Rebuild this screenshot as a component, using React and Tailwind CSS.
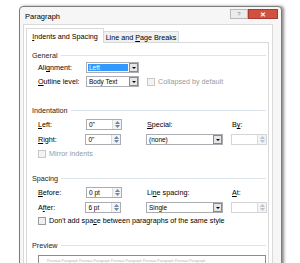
import React from "react";

const U = ({ children }) => <span className="underline underline-offset-[1px]">{children}</span>;

const SpinArrows = ({ disabled }) => (
  <div className="flex w-[9px] flex-col items-center justify-center gap-[1px] border-l border-[#dcdcdc] bg-[#f3f3f3]">
    <svg width="5" height="3" viewBox="0 0 5 3">
      <path d="M2.5 0 L5 3 L0 3 Z" fill={disabled ? "#b8c3d2" : "#6f86a6"} />
    </svg>
    <svg width="5" height="3" viewBox="0 0 5 3">
      <path d="M0 0 L5 0 L2.5 3 Z" fill={disabled ? "#b8c3d2" : "#6f86a6"} />
    </svg>
  </div>
);

const Spin = ({ value, disabled }) => (
  <div className={`flex h-[11px] w-[36px] border ${disabled ? "border-[#d5d5d5]" : "border-[#abadb3]"} bg-white`}>
    <span className="flex-1 pl-[2px] text-[6.5px] leading-[9px] text-black">{value}</span>
    <SpinArrows disabled={disabled} />
  </div>
);

const Select = ({ value, width, highlight }) => (
  <div className={`flex h-[11px] ${width} border border-[#abadb3] bg-white`}>
    <div className="flex flex-1 items-center p-[1px]">
      <span
        className={`h-full flex-1 pl-[1px] text-[6.5px] leading-[8px] ${highlight ? "bg-[#3399ff] text-white" : "text-black"}`}
      >
        {value}
      </span>
    </div>
    <div className="flex w-[9px] items-center justify-center border border-[#8a8a8a] bg-[#e6e6e6]">
      <svg width="4" height="2" viewBox="0 0 4 2">
        <path d="M0 0 L4 0 L2 2 Z" fill="#000" />
      </svg>
    </div>
  </div>
);

const Check = ({ label, disabled }) => (
  <div className="flex items-center gap-[3px]">
    <div className={`h-[8px] w-[8px] border ${disabled ? "border-[#c8c8c8] bg-[#f4f4f4]" : "border-[#9a9a9a] bg-[#f0f0f0]"}`} />
    <span className={`text-[7.2px] leading-[9px] ${disabled ? "text-[#9a9a9a]" : "text-black"}`}>{label}</span>
  </div>
);

const Group = ({ title }) => (
  <div className="flex h-[9px] items-center pr-[1px]">
    <span className="text-[7.2px] leading-[9px] text-[#1b1b1b]">{title}</span>
    <div className="ml-[3px] h-px flex-1 bg-[#dde4ec]" />
  </div>
);

const Label = ({ children, className = "" }) => (
  <span className={`text-[7.2px] leading-[9px] text-black ${className}`}>{children}</span>
);

export default function App() {
  return (
    <div className="h-[263px] w-[300px] overflow-hidden bg-white pl-[19px] pt-[6px] font-['Liberation_Sans',Arial,sans-serif]">
      <div className="h-[300px] w-[263px] rounded-t-[4px] border border-[#7c7c7c] bg-[#f6f6f6] shadow-[2px_0_3px_rgba(0,0,0,0.45)]">
        {/* title bar */}
        <div className="flex h-[17px]">
          <span className="pl-[5px] pt-[5px] text-[7.5px] leading-[9px] text-black">Paragraph</span>
          <div className="ml-auto flex items-start pr-[3px] pt-[2px]">
            <div className="flex h-[10px] w-[18px] items-center justify-center border border-[#b9b9b9] bg-[#ececec]">
              <span className="text-[6px] leading-[6px] text-[#8a8a8a]">?</span>
            </div>
            <div className="flex h-[10px] w-[30px] items-center justify-center border border-[#a93a2e] bg-[#d2503f]">
              <span className="text-[7px] font-bold leading-[7px] text-white">✕</span>
            </div>
          </div>
        </div>

        {/* client area */}
        <div className="ml-[3px] mr-[8px] h-[300px] border border-[#dadada] bg-white pl-[2px] pr-[3px] pt-[3px]">
          {/* tabs */}
          <div className="flex items-end">
            <div className="relative z-10 -mb-px flex h-[15px] w-[78px] items-center justify-center border border-b-0 border-[#d9d9d9] bg-white">
              <Label>
                <U>I</U>ndents and Spacing
              </Label>
            </div>
            <div className="flex h-[11px] w-[75px] items-center justify-center border border-l-0 border-b-0 border-[#d9d9d9] bg-[#f0f0f0]">
              <Label>
                Line and <U>P</U>age Breaks
              </Label>
            </div>
          </div>

          {/* panel */}
          <div className="h-[300px] border border-[#d9d9d9] bg-white pl-[5px] pr-[1px] pt-[8px]">
            <Group title="General" />

            <div className="mt-[2px] flex items-center pl-[6px]">
              <Label className="w-[48px]">
                Ali<U>g</U>nment:
              </Label>
              <Select value="Left" width="w-[53px]" highlight />
            </div>
            <div className="mt-[3px] flex items-center pl-[6px]">
              <Label className="w-[48px]">
                <U>O</U>utline level:
              </Label>
              <Select value="Body Text" width="w-[53px]" />
              <div className="ml-[8px]">
                <Check label="Collapsed by default" disabled />
              </div>
            </div>

            <div className="mt-[19px]">
              <Group title="Indentation" />
            </div>

            <div className="mt-[4px] flex items-center pl-[6px]">
              <Label className="w-[48px]">
                <U>L</U>eft:
              </Label>
              <Spin value={'0"'} />
              <Label className="ml-[25px] w-[85px]">
                <U>S</U>pecial:
              </Label>
              <Label>
                B<U>y</U>:
              </Label>
            </div>
            <div className="mt-[4px] flex items-center pl-[6px]">
              <Label className="w-[48px]">
                <U>R</U>ight:
              </Label>
              <Spin value={'0"'} />
              <div className="ml-[25px]">
                <Select value="(none)" width="w-[77px]" />
              </div>
              <div className="ml-[8px]">
                <Spin value="" disabled />
              </div>
            </div>
            <div className="mt-[4px] pl-[6px]">
              <Check label="Mirror indents" disabled />
            </div>

            <div className="mt-[16px]">
              <Group title="Spacing" />
            </div>

            <div className="mt-[4px] flex items-center pl-[6px]">
              <Label className="w-[48px]">
                <U>B</U>efore:
              </Label>
              <Spin value="0 pt" />
              <Label className="ml-[25px] w-[85px]">
                Li<U>n</U>e spacing:
              </Label>
              <Label>
                <U>A</U>t:
              </Label>
            </div>
            <div className="mt-[4px] flex items-center pl-[6px]">
              <Label className="w-[48px]">
                A<U>f</U>ter:
              </Label>
              <Spin value="6 pt" />
              <div className="ml-[25px]">
                <Select value="Single" width="w-[77px]" />
              </div>
              <div className="ml-[8px]">
                <Spin value="" disabled />
              </div>
            </div>
            <div className="mt-[3px] pl-[6px]">
              <Check
                label={
                  <>
                    Don't add spa<U>c</U>e between paragraphs of the same style
                  </>
                }
              />
            </div>

            <div className="mt-[16px]">
              <Group title="Preview" />
            </div>

            <div className="ml-[6px] mr-[1px] mt-[5px] h-[40px] border border-[#8c8c8c] bg-white px-[8px] pt-[3px]">
              <p className="text-[3.5px] leading-[4px] text-[#b5b5b5]">
                Previous Paragraph Previous Paragraph Previous Paragraph Previous Paragraph Previous Paragraph
              </p>
            </div>
          </div>
        </div>
      </div>
    </div>
  );
}
